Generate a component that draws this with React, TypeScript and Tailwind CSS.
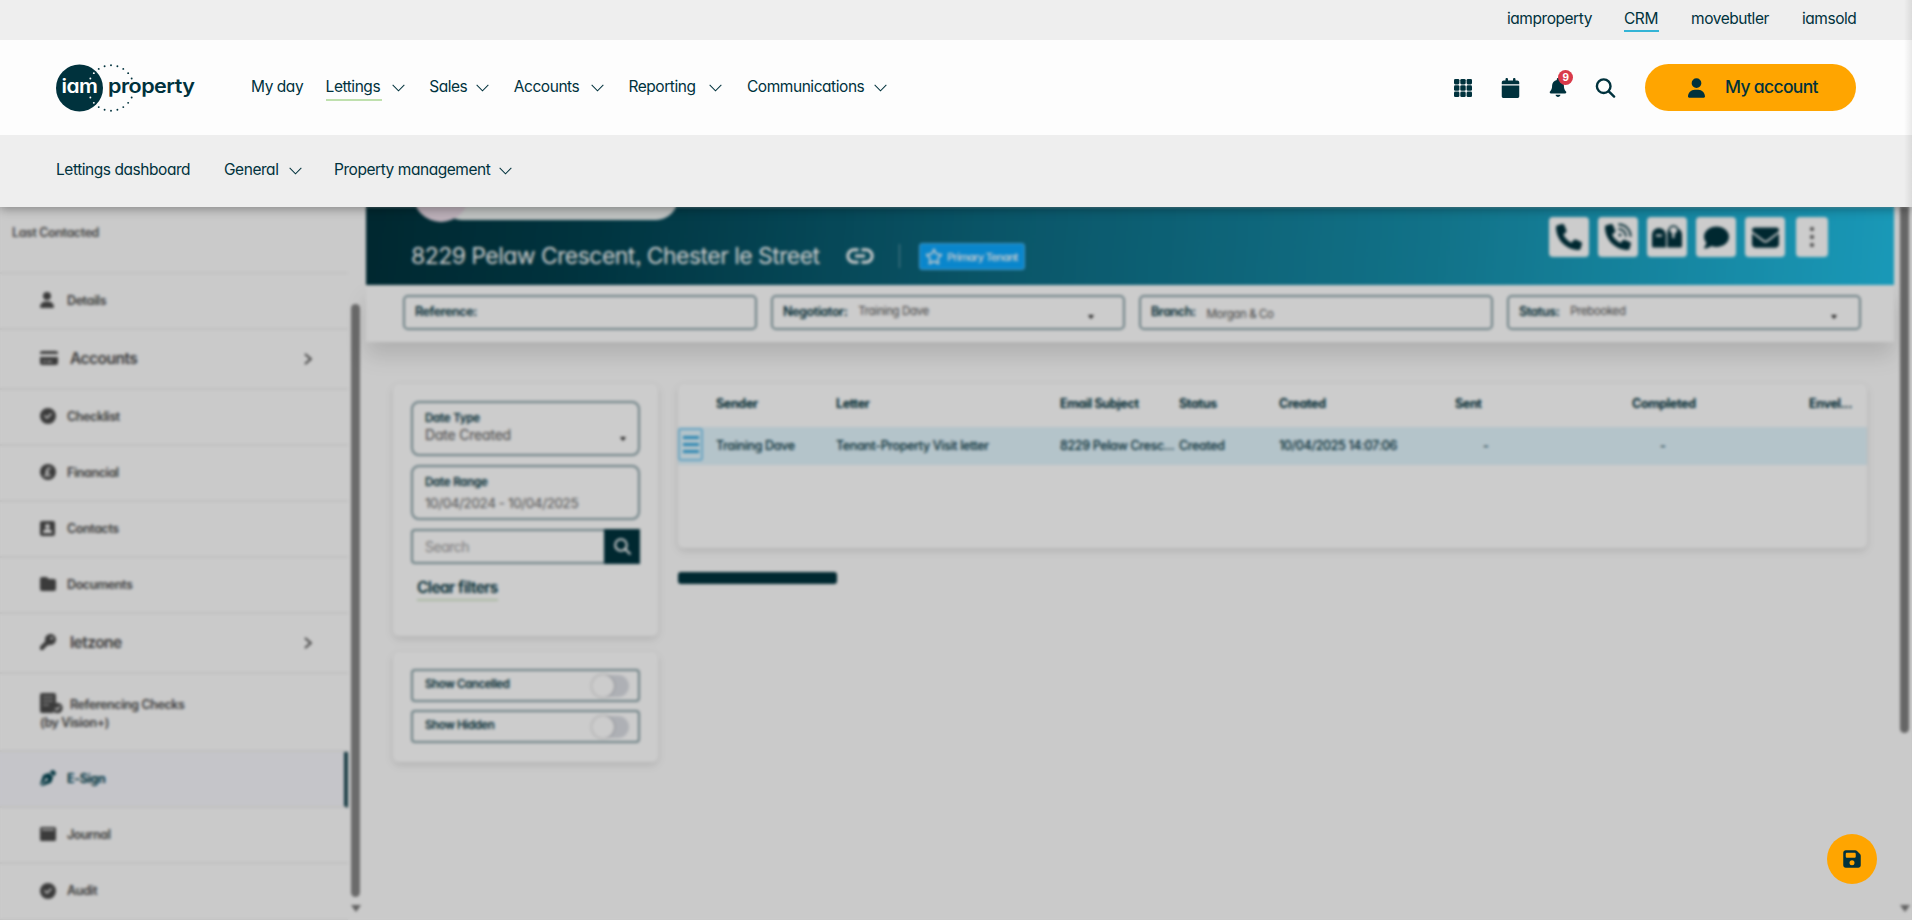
import type { ReactNode } from 'react';
import {
  FaBell, FaCalendar, FaCircleCheck, FaComment, FaCreditCard, FaEnvelope, FaFloppyDisk,
  FaFolder, FaKey, FaPenNib, FaPhone, FaRegStar, FaUser,
} from 'react-icons/fa6';

interface NavItem {
  label: string;
  width: string;
  menu?: boolean;
  active?: boolean;
}

const BRANDS: NavItem[] = [
  { label: 'iamproperty', width: 'w-[85px]' },
  { label: 'CRM', width: 'w-[35px]', active: true },
  { label: 'movebutler', width: 'w-[79px]' },
  { label: 'iamsold', width: 'w-[54px]' },
];

const MAIN_NAV: NavItem[] = [
  { label: 'My day', width: 'w-[50px]' },
  { label: 'Lettings', width: 'w-[56px]', menu: true, active: true },
  { label: 'Sales', width: 'w-[37px]', menu: true },
  { label: 'Accounts', width: 'w-[67px]', menu: true },
  { label: 'Reporting', width: 'w-[71px]', menu: true },
  { label: 'Communications', width: 'w-[117px]', menu: true },
];

const SUB_NAV: NavItem[] = [
  { label: 'Lettings dashboard', width: 'w-[136px]' },
  { label: 'General', width: 'w-[55px]', menu: true },
  { label: 'Property management', width: 'w-[155px]', menu: true },
];

function ChevronDown() {
  return (
    <svg className="w-[13px] h-[8px] shrink-0" viewBox="0 0 14 8" fill="none" stroke="currentColor" strokeWidth="1.1">
      <path d="M0.7 0.7 7 7 13.3 0.7" />
    </svg>
  );
}

const RING_DOTS = 22;

function Logo() {
  // the dots that would touch the wordmark on either side are left out
  const dots = Array.from({ length: RING_DOTS }, (_, i) => i).filter(i => ![5, 6, 16, 17].includes(i));
  return (
    <svg className="w-[140px] h-[48px] shrink-0" viewBox="0 0 140 48">
      <circle cx="23.5" cy="24" r="23.5" fill="#00323d" />
      {dots.map(i => {
        const a = (i / RING_DOTS) * Math.PI * 2;
        const x = 55 + Math.sin(a) * 22.7;
        const y = 24 - Math.cos(a) * 22.7;
        const inside = Math.hypot(x - 23.5, y - 24) < 23.5;
        return <circle key={i} cx={x} cy={y} r="0.95" fill={inside ? '#fff' : '#00323d'} />;
      })}
      <text x="5.5" y="29.3" fill="#fff" fontSize="19" fontWeight="600" textLength="36" lengthAdjust="spacingAndGlyphs">iam</text>
      <text x="52" y="29.3" fill="#00323d" fontSize="19" fontWeight="600" textLength="86.5" lengthAdjust="spacingAndGlyphs">property</text>
    </svg>
  );
}

function GridIcon() {
  return (
    <svg className="w-[18px] h-[18px]" viewBox="0 0 18 18" fill="currentColor">
      {[0, 6.3, 12.6].map(y => [0, 6.3, 12.6].map(x => (
        <rect key={`${x}-${y}`} x={x} y={y} width="5.400" height="5.400" rx="1.3" />
      )))}
    </svg>
  );
}

function SearchIcon({ className }: { className: string }) {
  return (
    <svg className={className} viewBox="0 0 20 20" fill="none" stroke="currentColor" strokeWidth="2.400" strokeLinecap="round">
      <circle cx="8.200" cy="8.200" r="6.800" />
      <path d="m13.300 13.300 5.300 5.300" />
    </svg>
  );
}

function LinkIcon() {
  return (
    <svg className="w-[28px] h-[16px]" viewBox="0 0 28 16" fill="none" stroke="currentColor" strokeWidth="3">
      <path d="M12.500 1.800H8a6.200 6.200 0 0 0 0 12.400h4.500M15.500 1.800H20a6.200 6.200 0 0 1 0 12.400h-4.500M9 8h10" />
    </svg>
  );
}

function MailboxIcon() {
  return (
    <svg className="w-[30px] h-[24px]" viewBox="0 0 30 24" fill="currentColor">
      <path fillRule="evenodd" d="M7 3a6.800 6.800 0 0 0-7 7v11a1.500 1.500 0 0 0 1.500 1.500H14V10a7 7 0 0 0-7-7ZM4 9.500h6v2H4Z" />
      <path d="M15.300 22.500h13.200A1.500 1.500 0 0 0 30 21V10c0-3-1.500-5.500-4-6.500V7l-3.500 3v3h-2.300V8.500L18 6l-2.200-1.500c-.3 2-.5 4-.5 6Z" />
      <path d="M17.300 7a4.500 4.500 0 1 1 8.400 0l-3 2.500" fill="none" stroke="currentColor" strokeWidth="1.500" />
    </svg>
  );
}

function PhoneWaveIcon() {
  return (
    <svg className="w-[28px] h-[28px]" viewBox="0 0 28 28" fill="currentColor">
      <path d="M8.900 1.900A1.600 1.600 0 0 0 7 1L2.200 2.300A1.700 1.700 0 0 0 1 4c0 12.700 10.300 23 23 23a1.700 1.700 0 0 0 1.600-1.200l1.300-4.800a1.700 1.700 0 0 0-1-2l-5.200-2.200a1.700 1.700 0 0 0-2 .5L16.500 20A17.400 17.400 0 0 1 8.100 11.600l2.700-2.200a1.700 1.700 0 0 0 .500-2Z" />
      <path d="M15 1.500A11.500 11.500 0 0 1 26.500 13M15 6.200A6.800 6.800 0 0 1 21.800 13" fill="none" stroke="currentColor" strokeWidth="1.800" strokeLinecap="round" />
      <circle cx="16" cy="12" r="1.500" />
    </svg>
  );
}

function PoundIcon() {
  return (
    <svg className="w-4 h-4" viewBox="0 0 16 16">
      <circle cx="8" cy="8" r="8" fill="currentColor" />
      <path d="M10.500 5.200C9.900 3.900 7 3.800 7 6v3c0 1.200-.6 2-1.500 2.500h5.200M5.300 8.300h4" fill="none" stroke="#fff" strokeWidth="1.400" />
    </svg>
  );
}

function ContactIcon() {
  return (
    <svg className="w-[15px] h-[15px]" viewBox="0 0 15 15">
      <rect width="15" height="15" rx="2" fill="currentColor" />
      <circle cx="7.500" cy="5.200" r="2.200" fill="#fff" />
      <path d="M3 12c0-3 2-4 4.500-4s4.500 1 4.500 4Z" fill="#fff" />
    </svg>
  );
}

function JournalIcon() {
  return (
    <svg className="w-4 h-4" viewBox="0 0 16 16" fill="currentColor">
      <path fillRule="evenodd" d="M1.500 1h13A1.500 1.500 0 0 1 16 2.500v11a1.500 1.500 0 0 1-1.500 1.500h-13A1.500 1.500 0 0 1 0 13.500v-11A1.500 1.500 0 0 1 1.500 1ZM2 3v1.300h12V3Z" />
    </svg>
  );
}

function ReferencingIcon() {
  return (
    <svg className="w-[23px] h-[21px]" viewBox="0 0 23 21">
      <path d="M2 0h12a2 2 0 0 1 2 2v9a6 6 0 0 0-2 9H2a2 2 0 0 1-2-2V2a2 2 0 0 1 2-2Z" fill="currentColor" />
      <path d="M3 4h10M3 8h10M3 12h6" stroke="#fff" strokeWidth="1" opacity="0.7" />
      <circle cx="17.500" cy="15" r="5.200" fill="currentColor" />
      <path d="m15.300 15 1.600 1.700 3-3.300" fill="none" stroke="#fff" strokeWidth="1.300" />
    </svg>
  );
}

interface SideItem {
  label: string;
  note?: string;
  icon: ReactNode;
  height: string;
  expandable?: boolean;
  active?: boolean;
}

const SIDE_ITEMS: SideItem[] = [
  { label: 'Details', icon: <FaUser className="w-[14px] h-[16px]" />, height: 'h-[56px]' },
  { label: 'Accounts', icon: <FaCreditCard className="w-[18px] h-[18px]" />, height: 'h-[60px]', expandable: true },
  { label: 'Checklist', icon: <FaCircleCheck className="w-4 h-4" />, height: 'h-[56px]' },
  { label: 'Financial', icon: <PoundIcon />, height: 'h-[56px]' },
  { label: 'Contacts', icon: <ContactIcon />, height: 'h-[56px]' },
  { label: 'Documents', icon: <FaFolder className="w-4 h-4" />, height: 'h-[56px]' },
  { label: 'letzone', icon: <FaKey className="w-4 h-4" />, height: 'h-[60px]', expandable: true },
  { label: 'Referencing Checks', note: '(by Vision+)', icon: <ReferencingIcon />, height: 'h-[78px]' },
  { label: 'E-Sign', icon: <FaPenNib className="w-4 h-4" />, height: 'h-[56px]', active: true },
  { label: 'Journal', icon: <JournalIcon />, height: 'h-[56px]' },
  { label: 'Audit', icon: <FaCircleCheck className="w-4 h-4" />, height: 'h-[57px]' },
];

const COLUMNS = [
  { title: 'Sender', value: 'Training Dave', width: 'w-[120px]' },
  { title: 'Letter', value: 'Tenant-Property Visit letter', width: 'w-[224px]' },
  { title: 'Email Subject', value: '8229 Pelaw Cresc...', width: 'w-[119px]' },
  { title: 'Status', value: 'Created', width: 'w-[100px]' },
  { title: 'Created', value: '10/04/2025 14:07:06', width: 'w-[176px]' },
  { title: 'Sent', value: '-', width: 'w-[177px]' },
  { title: 'Completed', value: '-', width: 'w-[177px]' },
  { title: 'Envel...', value: '', width: 'w-[58px]' },
];

function NavLinks({ items, gap }: { items: NavItem[]; gap: string }) {
  return (
    <nav className={`flex items-center ${gap}`}>
      {items.map(item => (
        <a key={item.label} className="flex items-center gap-[10px]">
          <span className={`${item.width} h-[26px] leading-[24px] whitespace-nowrap border-b-2 ${item.active ? 'border-[#bfe0ae]' : 'border-transparent'}`}>
            {item.label}
          </span>
          {item.menu && <ChevronDown />}
        </a>
      ))}
    </nav>
  );
}

function Header() {
  return (
    <header className="relative z-20 text-[15.5px] tracking-[-0.45px] text-[#00323d] shadow-[0_2px_10px_rgba(0,0,0,0.35)]">
      <div className="h-10 bg-[#eeeeee] flex justify-end gap-8 pr-14 pt-2">
        {BRANDS.map(b => (
          <a key={b.label} className={`${b.width} h-6 leading-[22px] whitespace-nowrap border-b-2 ${b.active ? 'border-[#33b4d6]' : 'border-transparent'}`}>
            {b.label}
          </a>
        ))}
      </div>
      <div className="h-[95px] bg-[#fdfdfd] flex items-center px-14">
        <Logo />
        <div className="ml-[55px]">
          <NavLinks items={MAIN_NAV} gap="gap-[24.6px]" />
        </div>
        <div className="ml-auto flex items-center">
          <GridIcon />
          <FaCalendar className="ml-[29px] w-[19px] h-[20px]" />
          <div className="relative ml-[29px]">
            <FaBell className="w-[18px] h-[19px]" />
            <span className="absolute -top-[8px] left-[9px] w-[15px] h-[15px] rounded-full bg-[#d93a4a] text-white text-[10px] font-bold leading-[15px] text-center">9</span>
          </div>
          <SearchIcon className="ml-[28px] w-[21px] h-[20px]" />
          <button className="ml-[29px] w-[211px] h-[47px] rounded-full bg-[#ffa500] flex items-center pl-[43px] gap-[20px] text-[17.5px] font-medium tracking-[-0.65px]">
            <FaUser className="w-[17px] h-[20px]" />
            <span className="whitespace-nowrap">My account</span>
          </button>
        </div>
      </div>
      <div className="h-[72px] bg-[#eeeeee] flex items-center px-14">
        <NavLinks items={SUB_NAV} gap="gap-[32px]" />
      </div>
      <div className="absolute right-0 top-0 w-2 h-full bg-gradient-to-r from-transparent to-black/8" />
    </header>
  );
}

function sideLabelClass(item: SideItem) {
  if (item.expandable) return 'w-[120px] pl-[3px] text-[15.5px] tracking-[-0.5px]';
  if (item.note) return 'pl-[3px] pt-[4px]';
  return 'pt-px';
}

function Sidebar() {
  return (
    <aside className="w-[348px] shrink-0 text-[#4a4a4a] text-[12.5px] tracking-[-0.4px] font-semibold">
      <div className="h-[67px] border-b-2 border-[#f2f2f2] pl-3 pt-4 leading-5 text-[#555]">Last Contacted</div>
      {SIDE_ITEMS.map(item => (
        <div
          key={item.label}
          className={`${item.height} pl-10 pb-px border-b-2 border-[#f0f0f0] flex flex-col justify-center ${item.active ? 'bg-[#f7f7fc] border-r-4 border-r-[#1d4a54] text-[#00424f] font-bold' : ''}`}
        >
          <div className="flex items-center">
            <span className={item.note ? 'w-[27px]' : 'w-[27px] pb-px'}>{item.icon}</span>
            <span className={sideLabelClass(item)}>{item.label}</span>
            {item.expandable && (
              <svg className="ml-auto mr-[36px] w-2 h-3" viewBox="0 0 8 12" fill="none" stroke="currentColor" strokeWidth="1.800">
                <path d="m1 1 6 5-6 5" />
              </svg>
            )}
          </div>
          {item.note && <span className="leading-[16px]">{item.note}</span>}
        </div>
      ))}
    </aside>
  );
}

function Caret() {
  return <span className="border-x-[3px] border-x-transparent border-t-[4px] border-t-[#222]" />;
}

function SummaryField({ label, value, caret, low }: { label: string; value?: string; caret?: string; low?: boolean }) {
  return (
    <div className="w-[354px] h-[35px] border-2 border-[#87a0a6] rounded-[5px] flex items-center px-[10px] text-[#00323d]">
      <span className="text-[12.5px] font-semibold tracking-[-0.4px]">{label}</span>
      <span className={`ml-[11px] text-[11.5px] tracking-[-0.4px] text-[#555] ${low ? 'pt-[5px]' : '-mt-[2px]'}`}>{value}</span>
      {caret && <span className={`ml-auto mt-2 flex ${caret}`}><Caret /></span>}
    </div>
  );
}

function ActionButton({ children }: { children: ReactNode }) {
  return <button className="w-10 h-10 rounded bg-white flex items-center justify-center">{children}</button>;
}

function PropertyHero() {
  return (
    <section className="h-[78px] overflow-hidden relative bg-[linear-gradient(95deg,#00323c_0%,#00404e_14%,#0c6980_40%,#168fab_70%,#20bfe6_100%)] text-white">
      <div className="absolute left-[74px] -top-[31px] w-[238px] h-[44px] rounded-full bg-[#f0f4f3]" />
      <div className="absolute left-[47px] -top-[41px] w-[56px] h-[56px] rounded-full bg-[#ecdce8]" />
      <div className="flex items-center pl-[45px] pt-[30px]">
        <h1 className="w-[435px] text-[23px] leading-[38px] tracking-[-0.55px] whitespace-nowrap">8229 Pelaw Crescent, Chester le Street</h1>
        <LinkIcon />
        <span className="ml-[25px] w-px h-6 bg-white/40" />
        <span className="ml-[19px] w-[106px] h-[27px] rounded-[3px] border border-[#59bdf5] bg-[#0ca8ff] flex items-center pl-[5px] gap-[4px] text-[11px] font-medium tracking-[-0.75px] whitespace-nowrap">
          <FaRegStar className="w-[18px] h-[17px]" />
          <span className="pt-[3px]">Primary Tenant</span>
        </span>
      </div>
      <div className="absolute right-[66px] top-[10px] flex gap-[9px] text-[#00323d]">
        <ActionButton><FaPhone className="w-[26px] h-[26px]" /></ActionButton>
        <ActionButton><PhoneWaveIcon /></ActionButton>
        <ActionButton><MailboxIcon /></ActionButton>
        <ActionButton><FaComment className="w-[27px] h-[25px]" /></ActionButton>
        <ActionButton><FaEnvelope className="w-[27px] h-[27px]" /></ActionButton>
        <button className="ml-[2px] w-8 h-10 rounded bg-white flex flex-col items-center justify-center gap-[4px]">
          {[0, 1, 2].map(i => <span key={i} className="w-1 h-1 rounded-full bg-[#555]" />)}
        </button>
      </div>
    </section>
  );
}

function Filters() {
  const card = 'bg-white rounded-md shadow-[0_3px_9px_rgba(0,0,0,0.12)] px-[18px]';
  const box = 'w-[229px] border-2 border-[#87a0a6] text-[#00323d]';
  return (
    <div className="w-[265px] flex flex-col gap-4">
      <div className={`${card} h-[252px] pt-[17px]`}>
        <div className={`${box} h-[55px] rounded-lg relative px-3 pt-[7px]`}>
          <p className="text-[11.5px] leading-4 font-semibold tracking-[-0.2px]">Date Type</p>
          <p className="text-[14px] leading-[17px] text-[#555] tracking-[-0.2px]">Date Created</p>
          <span className="absolute right-[12px] top-[34px] flex"><Caret /></span>
        </div>
        <div className={`${box} h-[55px] rounded-lg mt-[9px] px-3 pt-[7px]`}>
          <p className="text-[11.5px] leading-4 font-semibold tracking-[-0.2px]">Date Range</p>
          <p className="mt-[5px] text-[13.5px] leading-[17px] text-[#666] tracking-[-0.4px] whitespace-nowrap">10/04/2024 - 10/04/2025</p>
        </div>
        <div className={`${box} h-[35px] rounded-[4px] mt-[9px] pl-3 flex items-center justify-between`}>
          <span className="text-[14px] text-[#999] tracking-[-0.5px]">Search</span>
          <span className="w-[36px] h-[35px] -mr-[2px] bg-[#00323d] flex items-center justify-center text-white">
            <SearchIcon className="w-[17px] h-[17px]" />
          </span>
        </div>
        <a className="ml-[6px] mt-[12px] inline-block border-b-2 border-[#d5e8cc] text-[#00323d] text-[15.5px] leading-[23px] font-semibold tracking-[-0.55px]">Clear filters</a>
      </div>
      <div className={`${card} h-[110px] pt-[17px] flex flex-col gap-2`}>
        {['Show Cancelled', 'Show Hidden'].map(label => (
          <div key={label} className={`${box} h-[33px] rounded-[4px] pl-3 pr-[9px] flex items-center justify-between`}>
            <span className="text-[11.5px] font-semibold tracking-[-0.4px] pb-px">{label}</span>
            <span className="w-[37px] h-[22px] mt-px rounded-full bg-[#dadde3]">
              <span className="block w-[22px] h-[22px] rounded-full bg-white shadow-[0_0_3px_rgba(0,0,0,0.3)]" />
            </span>
          </div>
        ))}
      </div>
    </div>
  );
}

function LettersTable() {
  return (
    <div>
      <div className="w-[1189px] h-[164px] bg-white rounded-md shadow-[0_3px_9px_rgba(0,0,0,0.12)] text-[12.5px] tracking-[-0.35px] text-[#00323d]">
        <div className="h-[43px] pl-[38px] flex items-center font-bold">
          {COLUMNS.map(c => <span key={c.title} className={`${c.width} shrink-0 whitespace-nowrap pb-[2px]`}>{c.title}</span>)}
        </div>
        <div className="h-[38px] bg-[#e2f5fd] flex items-center font-medium">
          <span className="w-[25px] h-[33px] mb-[4px] mr-[13px] rounded-[3px] border-2 border-[#80cdf3] flex flex-col items-center justify-center gap-[4px]">
            {[0, 1, 2].map(i => <span key={i} className="w-[16px] h-[3px] bg-[#35a8df]" />)}
          </span>
          {COLUMNS.map(c => (
            <span key={c.title} className={`${c.width} shrink-0 whitespace-nowrap ${c.value === '-' ? 'pl-[28px]' : ''}`}>{c.value}</span>
          ))}
        </div>
      </div>
      <div className="mt-[24px] w-[159px] h-[12px] rounded-[3px] bg-[#00323d]" />
    </div>
  );
}

export default function App() {
  return (
    <div className="relative w-full h-[920px] overflow-hidden bg-[#fdfdfd] [font-family:Inter,'Noto_Sans',sans-serif] [font-feature-settings:'cv11','ss03']">
      <Header />
      <div className="relative h-[713px] overflow-hidden flex">
        <Sidebar />
        <div className="w-[18px] shrink-0 pl-[3px] pt-[97px]">
          <div className="w-[9px] h-[593px] rounded-full bg-[#868686]" />
          <div className="mt-[8px] w-0 border-x-[5px] border-x-transparent border-t-[7px] border-t-[#777]" />
        </div>
        <main className="w-[1528px] shrink-0">
          <PropertyHero />
          <section className="h-[57px] bg-white pl-[37px] pt-[10px] flex gap-[14px] shadow-[0_14px_22px_rgba(0,0,0,0.13)]">
            <SummaryField label="Reference:" />
            <SummaryField label="Negotiator:" value="Training Dave" caret="mr-[19px]" />
            <SummaryField label="Branch:" value="Morgan & Co" low />
            <SummaryField label="Status:" value="Prebooked" caret="mr-[12px]" />
          </section>
          <div className="flex gap-5 pl-[27px] pt-[42px]">
            <Filters />
            <LettersTable />
          </div>
        </main>
        <div className="w-[18px] h-full shrink-0 pl-[6px] flex flex-col">
          <div className="w-[9px] h-[526px] rounded-b-full bg-[#808080]" />
          <div className="mt-auto mb-[8px] w-0 border-x-[5px] border-x-transparent border-t-[7px] border-t-[#777]" />
        </div>
        {/* dimmed, out-of-focus page while the menu is open */}
        <div className="absolute inset-0 bg-black/20 backdrop-blur-[1.700px]" />
      </div>
      <button className="absolute left-[1827px] top-[834px] w-[50px] h-[50px] rounded-full bg-[#ffa500] flex items-center justify-center text-[#00323d]">
        <FaFloppyDisk className="w-[18px] h-[20px]" />
      </button>
    </div>
  );
}
